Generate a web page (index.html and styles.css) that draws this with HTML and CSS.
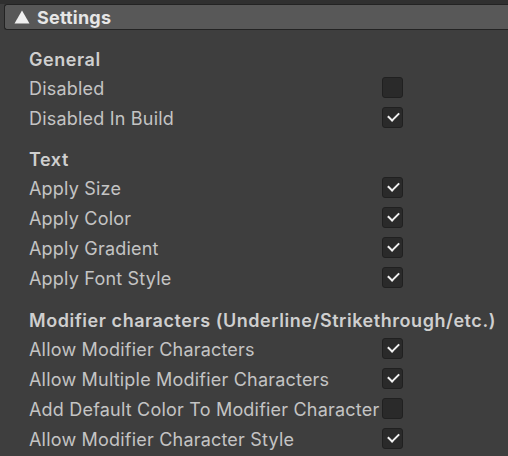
FILE: index.html
```html
<!DOCTYPE html>
<html>
<head>
<meta charset="utf-8">
<link rel="stylesheet" href="styles.css">
</head>
<body>
<div class="topstrip"></div>
<div class="foldout">
  <svg class="tri" width="16" height="14" viewBox="0 0 16 14"><polygon points="8,0.5 15.5,13.5 0.5,13.5" fill="#f0f0f0"/></svg>
  <span class="title">Settings</span>
</div>
<div class="content">
  <div class="group g1">
    <div class="head">General</div>
    <div class="row"><span class="label">Disabled</span><span class="cb"></span></div>
    <div class="row"><span class="label">Disabled In Build</span><span class="cb on"></span></div>
  </div>
  <div class="group g2">
    <div class="head">Text</div>
    <div class="row"><span class="label">Apply Size</span><span class="cb on"></span></div>
    <div class="row"><span class="label">Apply Color</span><span class="cb on"></span></div>
    <div class="row"><span class="label">Apply Gradient</span><span class="cb on"></span></div>
    <div class="row"><span class="label">Apply Font Style</span><span class="cb on"></span></div>
  </div>
  <div class="group g3">
    <div class="head">Modifier characters (Underline/Strikethrough/etc.)</div>
    <div class="row"><span class="label">Allow Modifier Characters</span><span class="cb on"></span></div>
    <div class="row"><span class="label">Allow Multiple Modifier Characters</span><span class="cb on"></span></div>
    <div class="row"><span class="label">Add Default Color To Modifier Character</span><span class="cb"></span></div>
    <div class="row"><span class="label">Allow Modifier Character Style</span><span class="cb on"></span></div>
  </div>
</div>
</body>
</html>
```
FILE: styles.css
```css
html, body {
  margin: 0;
  padding: 0;
  background: #3e3e3e;
  width: 508px;
  height: 456px;
  overflow: hidden;
  font-family: Inter, "Noto Sans", sans-serif;
  font-size: 18px;
  color: #c4c4c4;
}
.topstrip {
  height: 4px;
  background: #303030;
}
.foldout {
  margin-left: 4px;
  height: 24px;
  border: 1px solid #232323;
  border-right: none;
  border-radius: 3px 0 0 3px;
  background: #585858;
  display: flex;
  align-items: center;
  padding-left: 9px;
}
.tri {
  display: block;
  margin-right: 7px;
}
.title {
  font-weight: 700;
  color: #e6e6e6;
  font-size: 18px;
  letter-spacing: 0.2px;
}
.content {
  padding-left: 29px;
}
.group.g1 { margin-top: 17px; }
.group.g2 { margin-top: 14px; }
.group.g3 { margin-top: 15px; }
.head {
  height: 26px;
  line-height: 26px;
  font-weight: 600;
  color: #cfcfcf;
  letter-spacing: 0.55px;
  white-space: nowrap;
}
.row {
  height: 30px;
  display: flex;
  align-items: center;
}
.label {
  width: 353px;
  flex: none;
  white-space: nowrap;
  letter-spacing: 0.2px;
}
.cb {
  width: 19px;
  height: 19px;
  border: 1px solid #202020;
  border-radius: 3px;
  background: #2a2a2a;
  flex: none;
  position: relative;
  margin-top: -1px;
}
.cb.on::after {
  content: "";
  position: absolute;
  left: 5px;
  top: 4px;
  width: 9px;
  height: 5px;
  border-left: 2.5px solid #f2f2f2;
  border-bottom: 2.5px solid #f2f2f2;
  transform: rotate(-45deg);
}
```
